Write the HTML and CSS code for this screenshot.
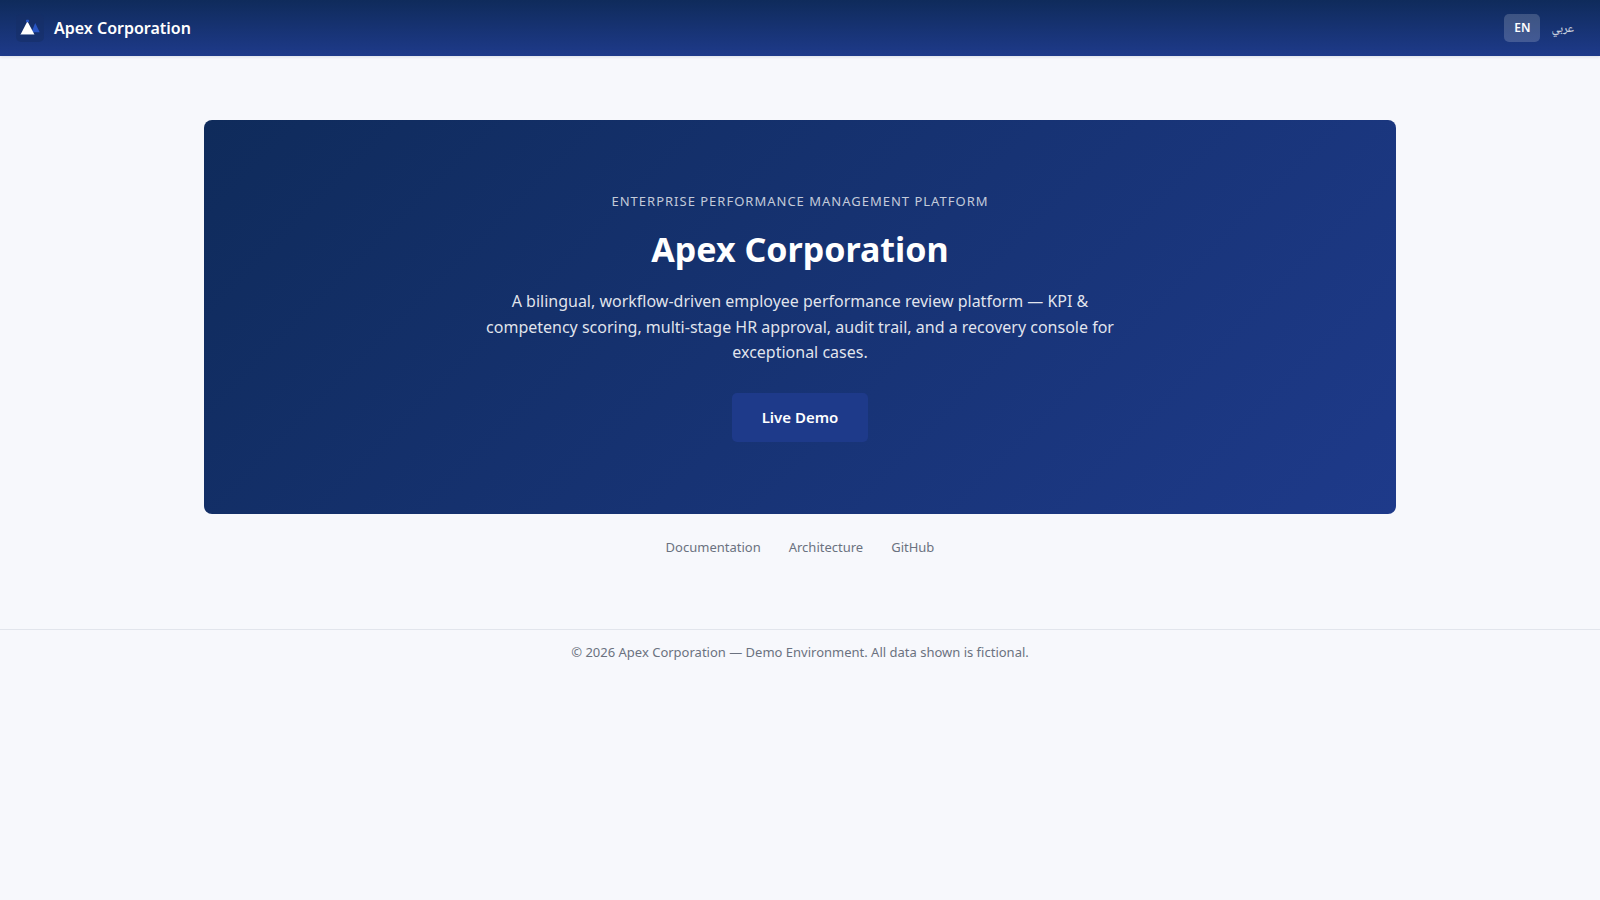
FILE: index.html
```html
<!DOCTYPE html>
<html lang="en">
<head>
<meta charset="utf-8">
<meta name="viewport" content="width=device-width, initial-scale=1">
<title>Apex Corporation</title>
<link rel="stylesheet" href="styles.css">
</head>
<body>
<header class="topbar">
  <a class="brand" href="#">
    <svg class="brand-logo" viewBox="0 0 28 28" aria-hidden="true">
      <rect class="logo-tile" width="28" height="28" rx="5"/>
      <path class="logo-back" d="M19.2 9 23.7 18.3H15.5z"/>
      <path class="logo-base" d="M4.3 20.3H18.4V21H4.3z"/>
      <path class="logo-front" d="M11.4 7.2 18.3 20.3H4.7z"/>
      <rect class="logo-back" x="10" y="5.8" width="3" height="2.4" rx=".6"/>
    </svg>
    <span>Apex Corporation</span>
  </a>
  <div class="languages">
    <button class="language language-active" type="button">EN</button>
    <button class="language" type="button" lang="ar">عربي</button>
  </div>
</header>
<main class="page">
  <section class="hero">
    <p class="eyebrow">Enterprise Performance Management Platform</p>
    <h1 class="title">Apex Corporation</h1>
    <p class="summary">A bilingual, workflow-driven employee performance review platform — KPI &amp; competency scoring, multi-stage HR approval, audit trail, and a recovery console for exceptional cases.</p>
    <a class="demo" href="#">Live Demo</a>
  </section>
  <nav class="links">
    <a href="#">Documentation</a>
    <a href="#">Architecture</a>
    <a href="#">GitHub</a>
  </nav>
</main>
<footer class="footer">© 2026 Apex Corporation — Demo Environment. All data shown is fictional.</footer>
</body>
</html>
```

FILE: styles.css
```css
* { box-sizing: border-box; }

body {
  margin: 0;
  background: #f7f8fc;
  color: #6b7280;
  font-family: "Noto Sans", "Noto Naskh Arabic", sans-serif;
  font-size: 16px;
  line-height: 1.6;
}

a { color: inherit; text-decoration: none; }

.topbar {
  display: flex;
  align-items: center;
  justify-content: space-between;
  min-height: 56px;
  padding: 0 16px;
  background: linear-gradient(180deg, #0f2b5b, #1e3a8a);
  box-shadow: 0 1px 3px rgba(15, 43, 91, 0.12);
}

.brand {
  display: flex;
  align-items: center;
  gap: 10px;
  color: #fff;
  font-weight: 600;
  line-height: 22px;
}

.brand-logo { width: 28px; height: 28px; }
.logo-tile { fill: #152f68; opacity: 0.6; }
.logo-back { fill: #2855c5; }
.logo-base { fill: #6f86ad; }
.logo-front { fill: #fff; }

.languages { display: flex; gap: 1px; }

.language {
  height: 28px;
  padding: 0 10px;
  border: 0;
  border-radius: 5px;
  background: transparent;
  color: rgba(255, 255, 255, 0.75);
  font-family: inherit;
  font-size: 12px;
  font-weight: 600;
  line-height: 18px;
  cursor: pointer;
}

.language-active { background: rgba(255, 255, 255, 0.18); color: #fff; }

.page {
  max-width: 1240px;
  margin: 0 auto;
  padding: 64px 24px 72px;
}

.hero {
  padding: 72px 32px;
  border-radius: 8px;
  background: linear-gradient(135deg, #0f2b5b, #1e3a8a);
  color: #fff;
  text-align: center;
}

.eyebrow {
  margin: 0 0 16px;
  color: rgba(255, 255, 255, 0.75);
  font-size: 13px;
  line-height: 18px;
  letter-spacing: 1px;
  text-transform: uppercase;
}

.title {
  margin: 0 0 16px;
  font-size: 34px;
  font-weight: 700;
  line-height: 46px;
}

.summary {
  max-width: 640px;
  margin: 0 auto;
  padding: 1px 0 27px;
  color: rgba(255, 255, 255, 0.88);
}

.demo {
  display: inline-block;
  padding: 12px 30px;
  border-radius: 5px;
  background: #1e3a8a;
  font-size: 15px;
  font-weight: 600;
  line-height: 25px;
}

.links {
  display: flex;
  justify-content: center;
  gap: 28px;
  margin-top: 23px;
  font-size: 13px;
  line-height: 20px;
}

.footer {
  padding: 12px 16px;
  border-top: 1px solid #e2e5ec;
  font-size: 13px;
  line-height: 20px;
  text-align: center;
}
```
